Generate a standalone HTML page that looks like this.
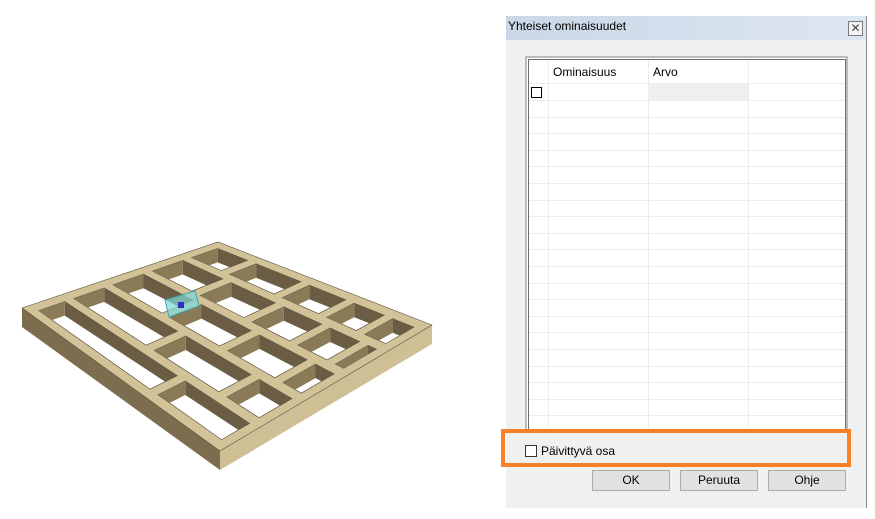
<!DOCTYPE html>
<html><head><meta charset="utf-8"><style>
html,body{margin:0;padding:0;width:875px;height:519px;overflow:hidden;background:#fff;font-family:"Liberation Sans",sans-serif;}
.abs{position:absolute}
.btn{position:absolute;top:470px;width:76px;height:19px;border:1px solid #adadad;background:#e1e1e1;font-size:12px;text-align:center;line-height:19px;color:#000}
</style></head><body>
<svg class="abs" style="left:0;top:0" width="500" height="519" id="frame"></svg>

<div class="abs" style="left:506px;top:16px;width:360px;height:492px;background:#f0f0f0;border-right:1px solid #888;"></div>
<div class="abs" style="left:506px;top:16px;width:360px;height:24px;background:linear-gradient(90deg,#c9d7e6,#dde7f2);"></div>
<div class="abs" style="left:508px;top:19px;font-size:12px;color:#000">Yhteiset ominaisuudet</div>
<div class="abs" style="left:848px;top:21px;width:13px;height:13px;border:1px solid #7a7a7a;background:#f4f4f4;font-size:12px;line-height:13px;text-align:center;color:#444">✕</div>

<svg class="abs" style="left:0;top:0" width="875" height="519">
<rect x="526" y="57" width="321" height="373" fill="#fff" stroke="#808080" stroke-width="1"/>
<rect x="528.5" y="59.5" width="317" height="370" fill="#fff" stroke="#6e6e6e" stroke-width="1"/>
<rect x="648" y="84" width="100" height="16" fill="#efefef"/>
<g stroke="#ececec" stroke-width="1">
<line x1="548.5" y1="60" x2="548.5" y2="430"/>
<line x1="648.5" y1="60" x2="648.5" y2="430"/>
<line x1="748.5" y1="60" x2="748.5" y2="430"/>
<line x1="529" y1="83.5" x2="845" y2="83.5"/>
</g>
<g stroke="#ececec" stroke-width="1" id="rows"></g>
<rect x="531.5" y="87.5" width="10" height="10" fill="#fff" stroke="#000"/>
<text x="553" y="76" font-size="12" font-family="Liberation Sans">Ominaisuus</text>
<text x="653" y="76" font-size="12" font-family="Liberation Sans">Arvo</text>
<rect x="503" y="431" width="346" height="34" fill="none" stroke="#f78126" stroke-width="4"/>
<rect x="525.5" y="445.5" width="11" height="11" fill="#fff" stroke="#333"/>
<text x="541" y="455" font-size="12" font-family="Liberation Sans">Päivittyvä osa</text>
</svg>
<div class="btn" style="left:592px">OK</div>
<div class="btn" style="left:680px">Peruuta</div>
<div class="btn" style="left:768px">Ohje</div>

<script>
var rows=document.getElementById('rows'),s='';
for(var y=100;y<430;y+=16.6){s+='<line x1="529" y1="'+(Math.round(y)+.5)+'" x2="845" y2="'+(Math.round(y)+.5)+'"/>';}
rows.innerHTML=s;
var L=[22,308],B=[218,242],F=[220,451],R=[432,325];
function P(u,v){return [(1-u)*(1-v)*L[0]+u*(1-v)*B[0]+(1-u)*v*F[0]+u*v*R[0],(1-u)*(1-v)*L[1]+u*(1-v)*B[1]+(1-u)*v*F[1]+u*v*R[1]];}
function pts(a){return a.map(function(p){return p[0].toFixed(1)+','+p[1].toFixed(1)}).join(' ');}
function quad(u0,v0,u1,v1){return [P(u0,v0),P(u1,v0),P(u1,v1),P(u0,v1)];}
var D=19,h='';
var l0=P(0,0),f0=P(0,1),r0=P(1,1);
h+='<polygon points="'+pts([l0,f0,[f0[0],f0[1]+D],[l0[0],l0[1]+D]])+'" fill="#7d6d4f"/>';
h+='<polygon points="'+pts([f0,r0,[r0[0],r0[1]+D],[f0[0],f0[1]+D]])+'" fill="#cfbf95"/>';
h+='<polygon points="'+pts(quad(0,0,1,1))+'" fill="#d2c298" stroke="#5a4e38" stroke-width="0.6"/>';
var w=0.045,wv=0.04;
var J=[0,0.2,0.4,0.6,0.8,1];
var blocks=[[0.62],[0.42,0.78],[0.3,0.58,0.85],[0.25,0.5,0.72,0.9],[0.2,0.45,0.66,0.84]];
var defs='',k=0;
for(var i=0;i<5;i++){
 var ua=J[i]+w/2*(i?1:2),ub=J[i+1]-w/2*(i<4?1:2);
 var vs=[wv].concat(blocks[i]).concat([1]);
 for(var j=0;j<vs.length-1;j++){
  var va=vs[j]+(j?wv/2:0),vb=vs[j+1]-(j<vs.length-2?wv/2:wv);
  var q=quad(ua,va,ub,vb);
  defs+='<clipPath id="c'+k+'"><polygon points="'+pts(q)+'"/></clipPath>';
  h+='<polygon points="'+pts(q)+'" fill="#fff" stroke="#4a4030" stroke-width="0.6"/>';
  var e1=[P(ub,va),P(ub,vb)],e2=[P(ua,va),P(ub,va)],d=14;
  h+='<g clip-path="url(#c'+k+')"><polygon points="'+pts([e1[0],e1[1],[e1[1][0],e1[1][1]+d],[e1[0][0],e1[0][1]+d]])+'" fill="#6b5d43"/>';
  h+='<polygon points="'+pts([e2[0],e2[1],[e2[1][0],e2[1][1]+d],[e2[0][0],e2[0][1]+d]])+'" fill="#8a7a57"/></g>';
  k++;
 }
}
h+='<polygon points="165,300 195,291 199,306 169,317" fill="#7fd8dc" fill-opacity="0.7" stroke="#3aa6a8" stroke-width="1"/>';
h+='<rect x="178" y="302" width="6" height="6" fill="#3030c0"/>';
document.getElementById('frame').innerHTML='<defs>'+defs+'</defs>'+h;
</script>
</body></html>
